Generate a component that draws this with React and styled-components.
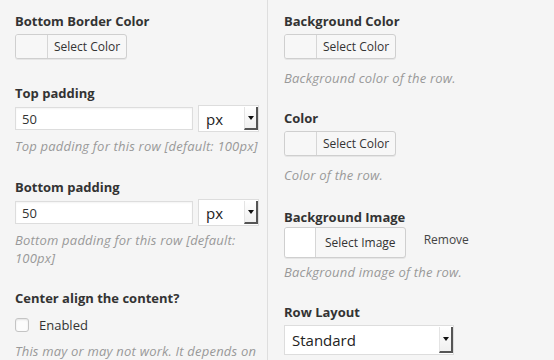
import React from "react";
import styled, { createGlobalStyle } from "styled-components";

const Global = createGlobalStyle`
  html, body { margin: 0; padding: 0; background: #f5f5f5; }
  body { font-family: "Open Sans", "Noto Sans", sans-serif; color: #333; }
`;

const Page = styled.div`
  display: grid;
  grid-template-columns: 268px 1fr;
  height: 360px;
  overflow: hidden;
  background: #f5f5f5;
`;

const Column = styled.div`
  display: flex;
  flex-direction: column;
  padding: ${(p) => (p.$right ? "12px 0 0 16px" : "12px 9px 0 15px")};
  border-right: ${(p) => (p.$right ? "none" : "1px solid #dedede")};
`;

const Field = styled.div`
  display: flex;
  flex-direction: column;
  align-items: flex-start;
  margin-bottom: ${(p) => p.$mb ?? 22}px;
`;

const Label = styled.div`
  font-size: 13px;
  font-weight: 700;
  line-height: 18px;
  color: #333;
  margin-bottom: ${(p) => p.$mb ?? 4}px;
`;

const Desc = styled.div`
  font-size: 13px;
  letter-spacing: 0.2px;
  font-style: italic;
  line-height: 18px;
  color: #999;
  margin-top: ${(p) => p.$mt ?? 10}px;
`;

const ColorButton = styled.div`
  display: flex;
  align-items: stretch;
  height: ${(p) => p.$h ?? 25}px;
  box-sizing: border-box;
  border: 1px solid #cfcfcf;
  border-radius: 3px;
  background: #f7f7f7;
  box-shadow: 0 1px 0 #e6e6e6;
`;

const Swatch = styled.div`
  width: ${(p) => p.$w ?? 30}px;
  background: ${(p) => p.$bg ?? "#f7f7f7"};
  border-right: 1px solid #d6d6d6;
  border-radius: 2px 0 0 2px;
`;

const ButtonText = styled.div`
  display: flex;
  align-items: center;
  padding: 0 ${(p) => p.$px ?? 6}px;
  font-size: 12px;
  color: #333;
`;

const ImageRow = styled.div`
  display: flex;
  align-items: center;
  gap: 18px;
`;

const RemoveLink = styled.span`
  font-size: 12px;
  color: #444;
  margin-top: -6px;
`;

const InputRow = styled.div`
  display: flex;
  align-items: center;
  gap: 5px;
`;

const TextInput = styled.div`
  width: 178px;
  height: 23px;
  box-sizing: border-box;
  background: #fff;
  border: 1px solid #ddd;
  box-shadow: inset 0 1px 2px rgba(0, 0, 0, 0.05);
  font-size: 13px;
  display: flex;
  align-items: center;
  padding: 0 6px;
  color: #333;
`;

const Select = styled.div`
  display: flex;
  align-items: stretch;
  width: ${(p) => p.$w}px;
  height: ${(p) => p.$h}px;
  box-sizing: border-box;
  background: #fff;
  border: 1px solid #ddd;
`;

const SelectValue = styled.div`
  flex: 1;
  display: flex;
  align-items: center;
  padding-left: ${(p) => p.$pl ?? 7}px;
  font-size: 15px;
  color: #222;
`;

const ArrowBox = styled.div`
  width: 14px;
  margin: 1px 0 1px 0;
  box-sizing: border-box;
  border-left: 1px solid #e4e4e4;
  border-right: 2px solid #555;
  border-bottom: 2px solid #555;
  background: linear-gradient(#fff, #f0f0f0);
  display: flex;
  align-items: center;
  justify-content: center;
`;

const Triangle = styled.div`
  width: 0;
  height: 0;
  border-left: 3px solid transparent;
  border-right: 3px solid transparent;
  border-top: 4px solid #111;
`;

const CheckRow = styled.label`
  display: flex;
  align-items: center;
  gap: 10px;
  font-size: 13px;
  color: #333;
`;

const Checkbox = styled.span`
  width: 14px;
  height: 14px;
  box-sizing: border-box;
  border: 1px solid #c4c4c4;
  border-radius: 3px;
  background: #fcfcfc;
  box-shadow: inset 0 1px 2px rgba(0, 0, 0, 0.1);
`;

function ColorPicker() {
  return (
    <ColorButton>
      <Swatch $w={31} />
      <ButtonText>Select Color</ButtonText>
    </ColorButton>
  );
}

function UnitSelect() {
  return (
    <Select $w={61} $h={27}>
      <SelectValue>px</SelectValue>
      <ArrowBox>
        <Triangle />
      </ArrowBox>
    </Select>
  );
}

export default function App() {
  return (
    <>
      <Global />
      <Page>
        <Column>
          <Field $mb={25}>
            <Label>Bottom Border Color</Label>
            <ColorPicker />
          </Field>
          <Field $mb={23}>
            <Label $mb={3}>Top padding</Label>
            <InputRow>
              <TextInput>50</TextInput>
              <UnitSelect />
            </InputRow>
            <Desc $mt={5}>Top padding for this row [default: 100px]</Desc>
          </Field>
          <Field $mb={22}>
            <Label $mb={3}>Bottom padding</Label>
            <InputRow>
              <TextInput>50</TextInput>
              <UnitSelect />
            </InputRow>
            <Desc $mt={5}>Bottom padding for this row [default: 100px]</Desc>
          </Field>
          <Field>
            <Label $mb={9}>Center align the content?</Label>
            <CheckRow>
              <Checkbox />
              Enabled
            </CheckRow>
            <Desc $mt={8}>This may or may not work. It depends on your theme.</Desc>
          </Field>
        </Column>
        <Column $right>
          <Field>
            <Label>Background Color</Label>
            <ColorPicker />
            <Desc>Background color of the row.</Desc>
          </Field>
          <Field $mb={24}>
            <Label>Color</Label>
            <ColorPicker />
            <Desc>Color of the row.</Desc>
          </Field>
          <Field>
            <Label $mb={1}>Background Image</Label>
            <ImageRow>
              <ColorButton $h={31}>
                <Swatch $w={30} $bg="#fff" />
                <ButtonText $px={9}>Select Image</ButtonText>
              </ColorButton>
              <RemoveLink>Remove</RemoveLink>
            </ImageRow>
            <Desc $mt={5}>Background image of the row.</Desc>
          </Field>
          <Field>
            <Label $mb={4}>Row Layout</Label>
            <Select $w={170} $h={30}>
              <SelectValue>Standard</SelectValue>
              <ArrowBox>
                <Triangle />
              </ArrowBox>
            </Select>
          </Field>
        </Column>
      </Page>
    </>
  );
}
